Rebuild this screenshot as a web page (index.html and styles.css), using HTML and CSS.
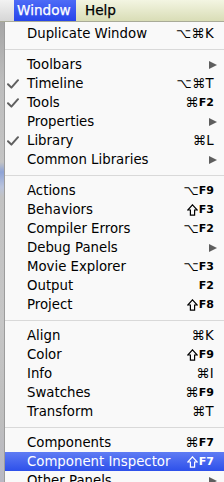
FILE: index.html
```html
<!DOCTYPE html>
<html>
<head>
<meta charset="utf-8">
<link rel="stylesheet" href="styles.css">
</head>
<body>
<div class="screen">
  <div class="menubar">
    <span class="mb-left"></span>
    <span class="mb-item active">Window</span>
    <span class="mb-item rest">Help</span>
  </div>
  <div class="body">
    <div class="strip"></div>
    <div class="menu">
      <div class="row first"><span class="chk"></span><span class="lbl">Duplicate Window</span><span class="sc">⌥⌘K</span></div>
      <div class="sep"></div>
      <div class="row"><span class="chk"></span><span class="lbl">Toolbars</span><span class="arrow"></span></div>
      <div class="row"><span class="chk"><svg class="tick" viewBox="0 0 12 10"><path d="M1 5.2 L4.4 8.6 L11 1.2"/></svg></span><span class="lbl">Timeline</span><span class="sc">⌥⌘T</span></div>
      <div class="row"><span class="chk"><svg class="tick" viewBox="0 0 12 10"><path d="M1 5.2 L4.4 8.6 L11 1.2"/></svg></span><span class="lbl">Tools</span><span class="sc">⌘<span class="fk">F2</span></span></div>
      <div class="row"><span class="chk"></span><span class="lbl">Properties</span><span class="arrow"></span></div>
      <div class="row"><span class="chk"><svg class="tick" viewBox="0 0 12 10"><path d="M1 5.2 L4.4 8.6 L11 1.2"/></svg></span><span class="lbl">Library</span><span class="sc">⌘L</span></div>
      <div class="row"><span class="chk"></span><span class="lbl">Common Libraries</span><span class="arrow"></span></div>
      <div class="sep"></div>
      <div class="row"><span class="chk"></span><span class="lbl">Actions</span><span class="sc">⌥<span class="fk">F9</span></span></div>
      <div class="row"><span class="chk"></span><span class="lbl">Behaviors</span><span class="sc"><svg class="shift" viewBox="0 0 11 12"><path d="M5.5 0.8 L10.2 6 H7.6 V11.2 H3.4 V6 H0.8 Z"/></svg><span class="fk">F3</span></span></div>
      <div class="row"><span class="chk"></span><span class="lbl">Compiler Errors</span><span class="sc">⌥<span class="fk">F2</span></span></div>
      <div class="row"><span class="chk"></span><span class="lbl">Debug Panels</span><span class="arrow"></span></div>
      <div class="row"><span class="chk"></span><span class="lbl">Movie Explorer</span><span class="sc">⌥<span class="fk">F3</span></span></div>
      <div class="row"><span class="chk"></span><span class="lbl">Output</span><span class="sc"><span class="fk">F2</span></span></div>
      <div class="row"><span class="chk"></span><span class="lbl">Project</span><span class="sc"><svg class="shift" viewBox="0 0 11 12"><path d="M5.5 0.8 L10.2 6 H7.6 V11.2 H3.4 V6 H0.8 Z"/></svg><span class="fk">F8</span></span></div>
      <div class="sep"></div>
      <div class="row"><span class="chk"></span><span class="lbl">Align</span><span class="sc">⌘K</span></div>
      <div class="row"><span class="chk"></span><span class="lbl">Color</span><span class="sc"><svg class="shift" viewBox="0 0 11 12"><path d="M5.5 0.8 L10.2 6 H7.6 V11.2 H3.4 V6 H0.8 Z"/></svg><span class="fk">F9</span></span></div>
      <div class="row"><span class="chk"></span><span class="lbl">Info</span><span class="sc">⌘I</span></div>
      <div class="row"><span class="chk"></span><span class="lbl">Swatches</span><span class="sc">⌘<span class="fk">F9</span></span></div>
      <div class="row"><span class="chk"></span><span class="lbl">Transform</span><span class="sc">⌘T</span></div>
      <div class="sep"></div>
      <div class="row"><span class="chk"></span><span class="lbl">Components</span><span class="sc">⌘<span class="fk">F7</span></span></div>
      <div class="row hl"><span class="chk"></span><span class="lbl">Component Inspector</span><span class="sc"><svg class="shift" viewBox="0 0 11 12"><path d="M5.5 0.8 L10.2 6 H7.6 V11.2 H3.4 V6 H0.8 Z"/></svg><span class="fk">F7</span></span></div>
      <div class="row"><span class="chk"></span><span class="lbl">Other Panels</span><span class="arrow"></span></div>
    </div>
  </div>
</div>
</body>
</html>
```
FILE: styles.css
```css
html, body {
  margin: 0;
  padding: 0;
  background: #ffffff;
}
.screen {
  width: 224px;
  height: 482px;
  overflow: hidden;
  font-family: "DejaVu Sans", "Liberation Sans", sans-serif;
  font-size: 13.3px;
  color: #000;
}
.menubar {
  display: flex;
  height: 21px;
  border-bottom: 1px solid #a9ab98;
  background: linear-gradient(#f3f5e2, #d9ddb6);
  font-size: 13.6px;
}
.mb-left {
  width: 14px;
  background: linear-gradient(#f2f2f2, #d6d6d6);
}
.mb-item {
  line-height: 21px;
  padding: 0 9px 0 3px;
  -webkit-text-stroke: 0.25px currentColor;
}
.mb-item.active {
  width: 50px;
  padding-left: 3px;
  padding-right: 9px;
  color: #fff;
  background: linear-gradient(#4d6bf7, #2645ea);
}
.mb-item.rest {
  padding-left: 9px;
}
.body {
  display: flex;
  height: 460px;
}
.strip {
  width: 5px;
  flex: none;
  background: linear-gradient(#a6a6a6 0px, #bdbdbd 60px, #c4c4c4 140px, #8ea3d6 150px, #b9c3dc 165px, #c2c2c2 175px, #c6c6c6 300px, #bebebe 400px, #b8b8c4 460px);
  box-shadow: inset -1px 0 0 #9c9c9c;
}
.menu {
  flex: 1;
  background: #f9f9f9;
  padding-top: 2px;
}
.row {
  display: flex;
  align-items: center;
  height: 19px;
  padding-right: 10px;
  white-space: nowrap;
}
.chk {
  width: 22px;
  flex: none;
  display: flex;
  align-items: center;
  padding-left: 2px;
  box-sizing: border-box;
}
.tick {
  width: 12px;
  height: 10px;
  fill: none;
  stroke: #606060;
  stroke-width: 2;
  stroke-linecap: round;
  stroke-linejoin: round;
}
.lbl {
  flex: 1;
}
.sc {
  display: flex;
  align-items: center;
  letter-spacing: 0.3px;
}
.shift {
  width: 11px;
  height: 12px;
  margin-right: 1px;
  fill: none;
  stroke: currentColor;
  stroke-width: 1.2;
  stroke-linejoin: miter;
}
.fk {
  font-size: 11px;
  font-weight: bold;
  letter-spacing: 0;
}
.arrow {
  width: 0;
  height: 0;
  margin-right: -3px;
  border-top: 4.5px solid transparent;
  border-bottom: 4.5px solid transparent;
  border-left: 8px solid #5e5e5e;
}
.sep {
  height: 12px;
  display: flex;
  align-items: center;
}
.sep::before {
  content: "";
  flex: 1;
  height: 1px;
  background: #d9d9d9;
}
.row.hl {
  color: #fff;
  background: linear-gradient(#5f7cf4, #2d50ea);
}
```
